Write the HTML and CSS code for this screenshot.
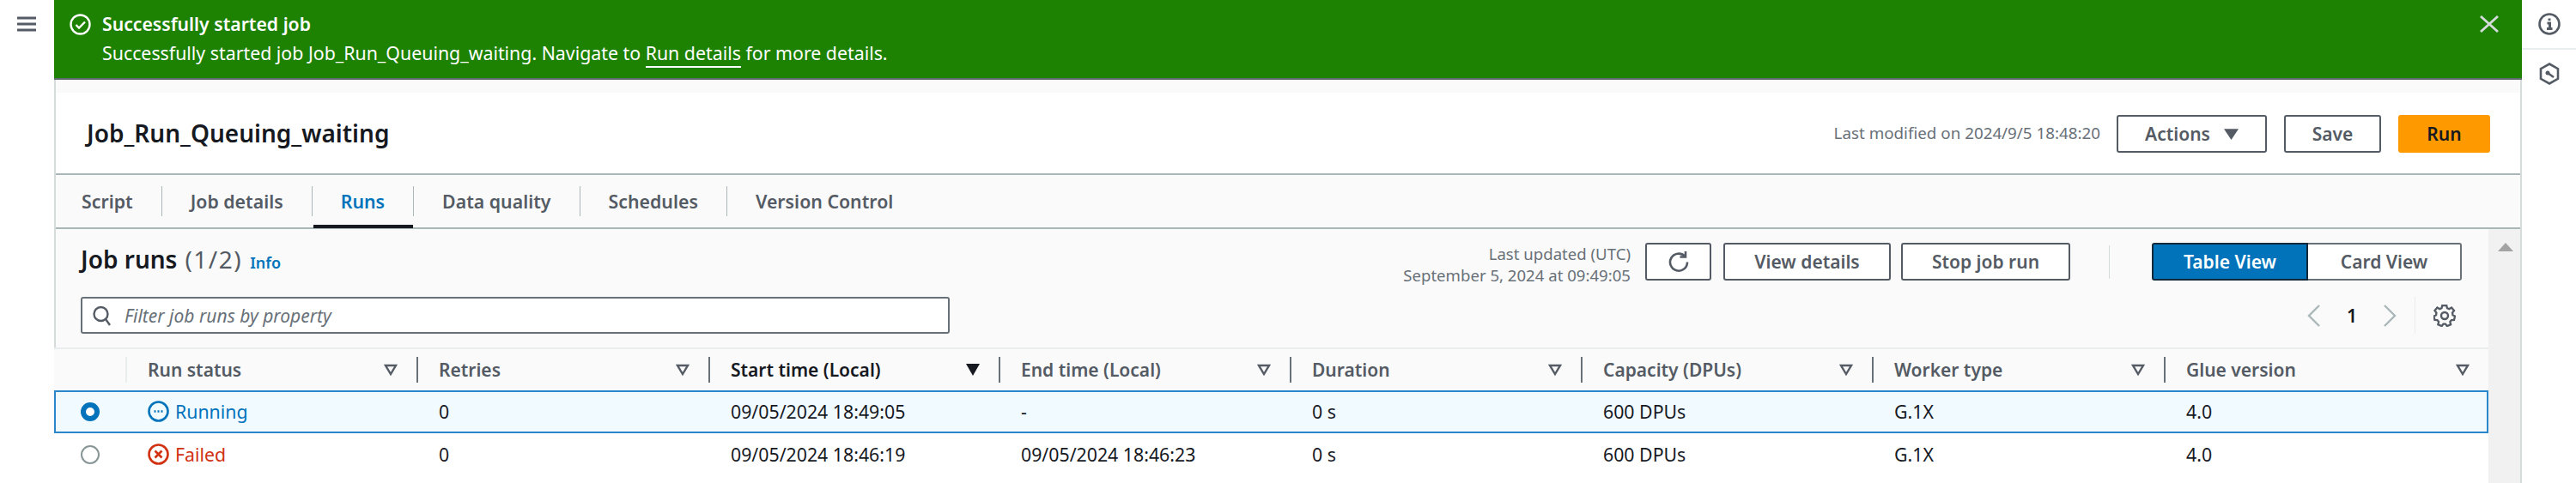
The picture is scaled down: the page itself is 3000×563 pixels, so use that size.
FILE: index.html
```html
<!DOCTYPE html>
<html lang="en">
<head>
<meta charset="utf-8">
<title>Job_Run_Queuing_waiting</title>
<link rel="stylesheet" href="styles.css">
</head>
<body>
<div class="app">
  <nav class="rail-left">
    <svg class="ic-menu" viewBox="0 0 22 18"><path d="M0 2h22M0 9h22M0 16h22"/></svg>
  </nav>
  <main class="main">
    <div class="flash">
      <svg class="ic-flash" viewBox="0 0 25 25"><circle cx="12.5" cy="12.5" r="11"/><path d="M7.500 13l3.500 3.500 7-7"/></svg>
      <div class="flash-text">
        <div class="flash-title">Successfully started job</div>
        <div class="flash-desc">Successfully started job Job_Run_Queuing_waiting. Navigate to <a class="flash-link">Run details</a> for more details.</div>
      </div>
      <svg class="ic-close" viewBox="0 0 22 20"><path d="M1 1l20 18M21 1L1 19"/></svg>
    </div>
    <div class="band"></div>
    <header class="head">
      <h1 class="job-title">Job_Run_Queuing_waiting</h1>
      <div class="head-actions">
        <span class="modified">Last modified on 2024/9/5 18:48:20</span>
        <button class="btn btn-actions">Actions <svg class="ic-caret" viewBox="0 0 16 12"><path d="M0 0h16L8 12z"/></svg></button>
        <button class="btn btn-save">Save</button>
        <button class="btn btn-run">Run</button>
      </div>
    </header>
    <div class="tabs">
      <span class="tab tab-first">Script</span>
      <span class="tab">Job details</span>
      <span class="tab tab-active">Runs</span>
      <span class="tab">Data quality</span>
      <span class="tab">Schedules</span>
      <span class="tab tab-last">Version Control</span>
    </div>
    <div class="body">
      <section class="content">
        <div class="bar">
          <div class="heading"><span class="heading-main">Job runs</span> <span class="heading-count">(1/2)</span> <a class="info">Info</a></div>
          <div class="bar-right">
            <div class="updated"><div>Last updated (UTC)</div><div>September 5, 2024 at 09:49:05</div></div>
            <button class="btn btn-refresh"><svg class="ic-refresh" viewBox="0 0 26 24"><path d="M23 12.500A10 10 0 1 1 20 5.500"/><path d="M21 0v6.500h-6.500"/></svg></button>
            <button class="btn btn-view">View details</button>
            <button class="btn btn-stop">Stop job run</button>
            <span class="bar-sep"></span>
            <div class="seg">
              <span class="seg-item seg-on">Table View</span>
              <span class="seg-item seg-off">Card View</span>
            </div>
          </div>
        </div>
        <div class="filter-row">
          <div class="filter">
            <svg class="ic-search" viewBox="0 0 22 24"><circle cx="9.500" cy="10" r="8"/><path d="M15 16l5 7"/></svg>
            <span class="placeholder">Filter job runs by property</span>
          </div>
          <div class="pager">
            <svg class="ic-chev" viewBox="0 0 16 26"><path d="M14 1L2 13l12 12"/></svg>
            <span class="page-num">1</span>
            <svg class="ic-chev" viewBox="0 0 16 26"><path d="M2 1l12 12L2 25"/></svg>
            <span class="pager-sep"></span>
            <svg class="ic-gear" viewBox="0 0 26 26"><path d="M10.500 1.500h5l.8 3.300 2.300 1 2.900-1.800 3 3.600-2 2.700.4 2.700 2.600 1.300-1 4.500-3.100.2-1.600 2 .7 3.200-4.300 1.900-2-2.500h-2.400l-2 2.500-4.300-1.900.7-3.200-1.600-2-3.100-.2-1-4.500 2.600-1.300.4-2.700-2-2.700 3-3.600 2.900 1.800 2.300-1z" transform="translate(0 -.5) scale(.98)"/><circle cx="13" cy="13" r="4"/></svg>
          </div>
        </div>
        <div class="thead grid">
          <div class="th-blank"></div>
          <div class="th th-light"><span>Run status</span><svg class="ic-filter" viewBox="0 0 16 14"><path d="M2 2h12l-6 10z"/></svg></div>
          <div class="th"><span>Retries</span><svg class="ic-filter" viewBox="0 0 16 14"><path d="M2 2h12l-6 10z"/></svg></div>
          <div class="th th-sorted"><span>Start time (Local)</span><svg class="ic-sort" viewBox="0 0 16 14"><path d="M0 0h16L8 14z"/></svg></div>
          <div class="th"><span>End time (Local)</span><svg class="ic-filter" viewBox="0 0 16 14"><path d="M2 2h12l-6 10z"/></svg></div>
          <div class="th"><span>Duration</span><svg class="ic-filter" viewBox="0 0 16 14"><path d="M2 2h12l-6 10z"/></svg></div>
          <div class="th"><span>Capacity (DPUs)</span><svg class="ic-filter" viewBox="0 0 16 14"><path d="M2 2h12l-6 10z"/></svg></div>
          <div class="th"><span>Worker type</span><svg class="ic-filter" viewBox="0 0 16 14"><path d="M2 2h12l-6 10z"/></svg></div>
          <div class="th"><span>Glue version</span><svg class="ic-filter" viewBox="0 0 16 14"><path d="M2 2h12l-6 10z"/></svg></div>
        </div>
        <div class="row row-selected grid">
          <div class="cell-radio"><span class="radio radio-on"></span></div>
          <div class="td status status-run"><svg class="ic-status" viewBox="0 0 25 25"><circle cx="12.500" cy="12.500" r="11"/><path class="dots" d="M7.500 12.500h2M11.500 12.500h2M15.500 12.500h2"/></svg>Running</div>
          <div class="td">0</div>
          <div class="td">09/05/2024 18:49:05</div>
          <div class="td">-</div>
          <div class="td">0 s</div>
          <div class="td">600 DPUs</div>
          <div class="td">G.1X</div>
          <div class="td">4.0</div>
        </div>
        <div class="row grid">
          <div class="cell-radio"><span class="radio"></span></div>
          <div class="td status status-fail"><svg class="ic-status" viewBox="0 0 25 25"><circle cx="12.500" cy="12.500" r="11"/><path d="M8.500 8.500l8 8M16.500 8.500l-8 8"/></svg>Failed</div>
          <div class="td">0</div>
          <div class="td">09/05/2024 18:46:19</div>
          <div class="td">09/05/2024 18:46:23</div>
          <div class="td">0 s</div>
          <div class="td">600 DPUs</div>
          <div class="td">G.1X</div>
          <div class="td">4.0</div>
        </div>
        <div class="rest"></div>
      </section>
      <aside class="scrollbar"><svg class="ic-up" viewBox="0 0 18 10"><path d="M9 0l9 10H0z"/></svg></aside>
    </div>
  </main>
  <aside class="rail-right">
    <div class="rail-cell">
      <svg class="ic-rail" viewBox="0 0 26 26"><circle cx="13" cy="13" r="11.500"/><path class="thick" d="M13 6.500v2.500M10.500 12h3v6.500M10 18.500h6.500"/></svg>
    </div>
    <div class="rail-cell rail-cell-2">
      <svg class="ic-rail" viewBox="0 0 26 26"><path d="M13 1.500l10 5.700v11.600l-10 5.700-10-5.700V7.200z"/><circle class="solid" cx="11" cy="12" r="2.500"/><path d="M11 12l7 5"/></svg>
    </div>
  </aside>
</div>
</body>
</html>
```

FILE: styles.css
```css
* { box-sizing: border-box; }
html, body { margin: 0; padding: 0; height: 100%; background: #fff; overflow: hidden; }
body { font-family: "Noto Sans", "Open Sans", sans-serif; font-size: 21px; color: #16191f; }
svg { display: block; flex: none; fill: none; }
button { font: inherit; margin: 0; cursor: pointer; }
a { cursor: pointer; }

.app { display: flex; width: 3000px; height: 563px; }

.rail-left { width: 63px; flex: none; padding: 19px 0 0 20px; background: #fff; }
.ic-menu { width: 22px; height: 18px; stroke: #545b64; stroke-width: 3; }

.main { width: 2874px; flex: none; display: flex; flex-direction: column; border-right: 2px solid #d5dbdb; border-left: 2px solid #d5dbdb; background: #fafafa; }

.flash { height: 93px; margin: 0 -2px; flex: none; display: flex; padding: 14px 27px 0 18px; background: #1d8102; border-bottom: 2px solid #5f6b6b; color: #fff; }
.ic-flash { width: 25px; height: 25px; margin: 2px 13px 0 0; stroke: #fff; stroke-width: 2.400; }
.flash-text { flex: 1; }
.flash-title { font-size: 21.200px; font-weight: 600; line-height: 28px; }
.flash-desc { font-size: 21.330px; line-height: 28px; margin-top: 6px; }
.flash-link { color: #fff; border-bottom: 2px solid #fff; padding-bottom: 1px; }
.ic-close { width: 22px; height: 20px; margin-top: 4px; stroke: #d5dbdb; stroke-width: 2.800; }

.band { height: 15px; flex: none; background: #fafafa; }

.head { height: 96px; flex: none; display: flex; align-items: center; justify-content: space-between; padding: 0 35px 0 36px; background: #fff; border-bottom: 2px solid #aab7b8; }
.job-title { margin: 0; font-size: 28px; font-weight: 600; color: #16191f; }
.head-actions { display: flex; align-items: center; padding-top: 2px; }
.modified { font-size: 18.800px; color: #687078; margin: -2px 19px 0 0; }

.btn { height: 44px; background: #fff; border: 2px solid #545b64; border-radius: 3px; color: #545b64; font-size: 21px; font-weight: 600; padding: 0; display: inline-flex; align-items: center; justify-content: center; }
.btn-actions { width: 175px; gap: 16px; }
.btn-save { width: 113px; margin-left: 20px; }
.btn-run { width: 107px; margin-left: 20px; background: #ff9900; border-color: #ff9900; color: #16191f; }
.ic-caret { width: 17px; height: 13px; fill: #545b64; }

.tabs { height: 63px; flex: none; display: flex; align-items: flex-start; padding: 13px 0 0; background: #fafafa; border-bottom: 2px solid #aab7b8; }
.tab { position: relative; display: flex; align-items: center; padding: 0 33px; font-size: 21.300px; font-weight: 600; color: #545b64; height: 35px; border-right: 1px solid #aab7b8; }
.tab-first { padding-left: 30px; }
.tab-last { border-right: 0; }
.tab-active { color: #0073bb; }
.tab-active::after { content: ""; position: absolute; left: 1px; right: 0; top: 45px; height: 4px; background: #16191f; }

.body { flex: 1; display: flex; min-height: 0; }
.content { flex: 1; min-width: 0; display: flex; flex-direction: column; }
.scrollbar { width: 37px; flex: none; background: #f1f1f1; padding: 16px 0 0 11px; }
.ic-up { width: 18px; height: 10px; fill: #a3a3a3; }

.bar { display: flex; justify-content: space-between; height: 60px; padding: 16px 31px 0 29px; flex: none; }
.heading { display: flex; align-items: baseline; height: 40px; }
.heading-main { font-size: 28px; font-weight: 600; }
.heading-count { font-size: 28px; color: #545b64; margin-left: 9px; letter-spacing: 1.500px; }
.info { font-size: 18px; font-weight: 600; color: #0073bb; margin-left: 9px; }
.bar-right { display: flex; align-items: flex-start; }
.updated { font-size: 18.600px; color: #687078; text-align: right; line-height: 25px; margin: 0 17px 0 0; }
.btn-refresh { width: 77px; }
.ic-refresh { width: 26px; height: 24px; stroke: #545b64; stroke-width: 2.600; }
.btn-view { width: 195px; margin-left: 14px; }
.btn-stop { width: 197px; margin-left: 12px; }
.bar-sep { width: 1px; height: 39px; margin: 3px 49px 0 45px; background: #d5dbdb; }
.seg { display: flex; height: 44px; font-size: 21px; font-weight: 600; }
.seg-item { display: flex; align-items: center; justify-content: center; }
.seg-on { width: 182px; background: #0073bb; color: #fff; border: 2px solid #12293b; border-radius: 3px 0 0 3px; }
.seg-off { width: 179px; background: #fff; color: #545b64; border: 2px solid #687078; border-left: 0; border-radius: 0 3px 3px 0; }

.filter-row { display: flex; justify-content: space-between; height: 78px; flex: none; padding: 19px 31px 0 29px; }
.filter { width: 1012px; height: 43px; display: flex; align-items: center; padding-left: 12px; background: #fff; border: 2px solid #687078; border-radius: 3px; }
.ic-search { width: 22px; height: 24px; margin-right: 15px; stroke: #545b64; stroke-width: 2.400; }
.placeholder { font-size: 21px; font-style: italic; color: #687078; }
.pager { display: flex; align-items: center; height: 43px; }
.ic-chev { width: 16px; height: 26px; stroke: #aab7b8; stroke-width: 2.400; }
.page-num { width: 16px; margin: 0 28px; text-align: center; font-weight: 600; font-size: 21px; }
.pager-sep { width: 1px; height: 43px; background: #eaeded; margin: 0 21px; }
.ic-gear { width: 26px; height: 26px; margin-right: 7px; stroke: #545b64; stroke-width: 2.400; }

.grid { display: grid; grid-template-columns: 83px 339px 340px 338px 339px 339px 339px 340px 378px; margin-left: -2px; }
.thead { height: 50px; flex: none; align-items: center; border-top: 2px solid #eaeded; background: #fafafa; }
.th { height: 30px; display: flex; align-items: center; justify-content: space-between; padding: 0 22px 0 24px; border-left: 2px solid #687078; font-size: 21px; font-weight: 600; color: #545b64; }
.th-light { border-left-color: #eaeded; }
.th-sorted { color: #16191f; }
.ic-filter { width: 16px; height: 14px; stroke: #545b64; stroke-width: 2.400; }
.ic-sort { width: 16px; height: 14px; fill: #16191f; }

.row { height: 50px; flex: none; align-items: center; background: #fff; }
.row-selected { background: #f1faff; box-shadow: inset 0 0 0 2px #2a87cb; }
.td { padding: 0 0 2px 26px; font-size: 21.300px; color: #16191f; }
.cell-radio { padding-left: 31px; display: flex; }
.radio { width: 22px; height: 22px; border-radius: 50%; border: 2px solid #879596; background: #fff; }
.radio-on { border: 6px solid #0073bb; }
.status { display: flex; align-items: center; gap: 7px; }
.ic-status { width: 25px; height: 25px; stroke-width: 2.600; }
.status-run { color: #0073bb; }
.status-run .ic-status { stroke: #0073bb; }
.dots { stroke-dasharray: 2 2; stroke-width: 2.400; }
.status-fail { color: #d13212; }
.status-fail .ic-status { stroke: #d13212; }
.rest { flex: 1; background: #fff; margin-left: -2px; }

.rail-right { flex: 1; background: #fff; }
.rail-cell { height: 58px; display: flex; justify-content: center; padding: 15px 0 0; border-bottom: 2px solid #eaeded; }
.rail-cell-2 { border-bottom: 0; }
.ic-rail { width: 26px; height: 26px; stroke: #545b64; stroke-width: 2.600; }
.thick { stroke-width: 3; }
.solid { fill: #545b64; stroke: none; }
```
